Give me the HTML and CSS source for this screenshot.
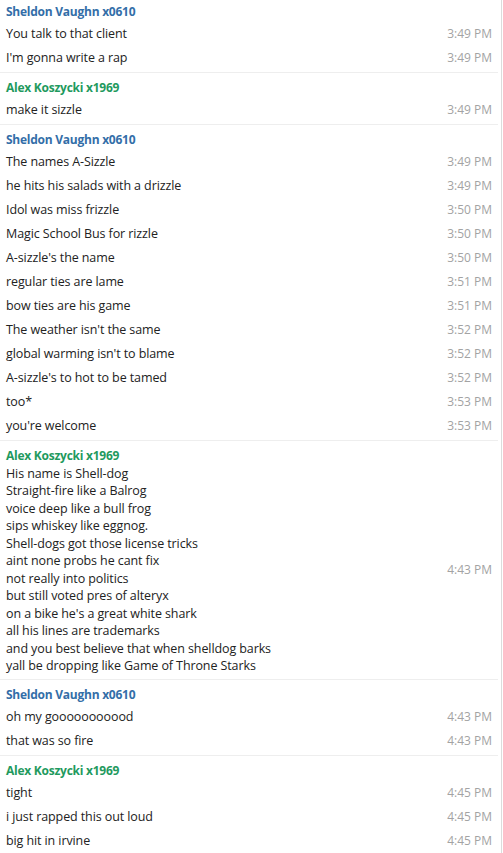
FILE: index.html
```html
<!DOCTYPE html>
<html>
<head>
<meta charset="utf-8">
<link rel="stylesheet" href="styles.css">
</head>
<body>
<div class="chat">
  <div class="list">
    <div class="group first">
      <div class="name blue">Sheldon Vaughn x0610</div>
      <div class="row"><span class="msg">You talk to that client</span><span class="time">3:49 PM</span></div>
      <div class="row"><span class="msg">I'm gonna write a rap</span><span class="time">3:49 PM</span></div>
    </div>
    <div class="group">
      <div class="name green">Alex Koszycki x1969</div>
      <div class="row"><span class="msg">make it sizzle</span><span class="time">3:49 PM</span></div>
    </div>
    <div class="group">
      <div class="name blue">Sheldon Vaughn x0610</div>
      <div class="row"><span class="msg">The names A-Sizzle</span><span class="time">3:49 PM</span></div>
      <div class="row"><span class="msg">he hits his salads with a drizzle</span><span class="time">3:49 PM</span></div>
      <div class="row"><span class="msg">Idol was miss frizzle</span><span class="time">3:50 PM</span></div>
      <div class="row"><span class="msg">Magic School Bus for rizzle</span><span class="time">3:50 PM</span></div>
      <div class="row"><span class="msg">A-sizzle's the name</span><span class="time">3:50 PM</span></div>
      <div class="row"><span class="msg">regular ties are lame</span><span class="time">3:51 PM</span></div>
      <div class="row"><span class="msg">bow ties are his game</span><span class="time">3:51 PM</span></div>
      <div class="row"><span class="msg">The weather isn't the same</span><span class="time">3:52 PM</span></div>
      <div class="row"><span class="msg">global warming isn't to blame</span><span class="time">3:52 PM</span></div>
      <div class="row"><span class="msg">A-sizzle's to hot to be tamed</span><span class="time">3:52 PM</span></div>
      <div class="row"><span class="msg">too*</span><span class="time">3:53 PM</span></div>
      <div class="row"><span class="msg">you're welcome</span><span class="time">3:53 PM</span></div>
    </div>
    <div class="group">
      <div class="name green">Alex Koszycki x1969</div>
      <div class="row multi">
        <div class="msg lines">His name is Shell-dog<br>Straight-fire like a Balrog<br>voice deep like a bull frog<br>sips whiskey like eggnog.<br>Shell-dogs got those license tricks<br>aint none probs he cant fix<br>not really into politics<br>but still voted pres of alteryx<br>on a bike he's a great white shark<br>all his lines are trademarks<br>and you best believe that when shelldog barks<br>yall be dropping like Game of Throne Starks</div>
        <span class="time">4:43 PM</span>
      </div>
    </div>
    <div class="group">
      <div class="name blue">Sheldon Vaughn x0610</div>
      <div class="row"><span class="msg">oh my gooooooooood</span><span class="time">4:43 PM</span></div>
      <div class="row"><span class="msg">that was so fire</span><span class="time">4:43 PM</span></div>
    </div>
    <div class="group">
      <div class="name green">Alex Koszycki x1969</div>
      <div class="row"><span class="msg">tight</span><span class="time">4:45 PM</span></div>
      <div class="row"><span class="msg">i just rapped this out loud</span><span class="time">4:45 PM</span></div>
      <div class="row"><span class="msg">big hit in irvine</span><span class="time">4:45 PM</span></div>
    </div>
  </div>
</div>
</body>
</html>
```
FILE: styles.css
```css
html, body {
  margin: 0;
  padding: 0;
  background: #ffffff;
  height: 100%;
  overflow: hidden;
}
body {
  font-family: "Open Sans", "Noto Sans", "Liberation Sans", sans-serif;
  color: #222222;
}
.chat {
  width: 501px;
  height: 853px;
  border-right: 1px solid #dcdcdc;
  overflow: hidden;
  box-sizing: content-box;
}
.list {
  margin-top: -3px;
}
.group {
  margin-right: 3px;
  padding: 6px 6px 3px 6px;
  border-bottom: 1px solid #eeeeee;
}
.name {
  font-size: 12px;
  font-weight: bold;
  line-height: 18px;
  letter-spacing: -0.25px;
}
.blue { color: #336ea8; }
.green { color: #1f9a5e; }
.row {
  display: flex;
  justify-content: space-between;
  align-items: center;
  min-height: 24px;
}
.msg {
  font-size: 12.5px;
  letter-spacing: -0.1px;
}
.lines {
  line-height: 17.45px;
}
.row.multi {
  padding-bottom: 2px;
}
.time {
  font-size: 12px;
  color: #a3a3a3;
  flex-shrink: 0;
}
```
